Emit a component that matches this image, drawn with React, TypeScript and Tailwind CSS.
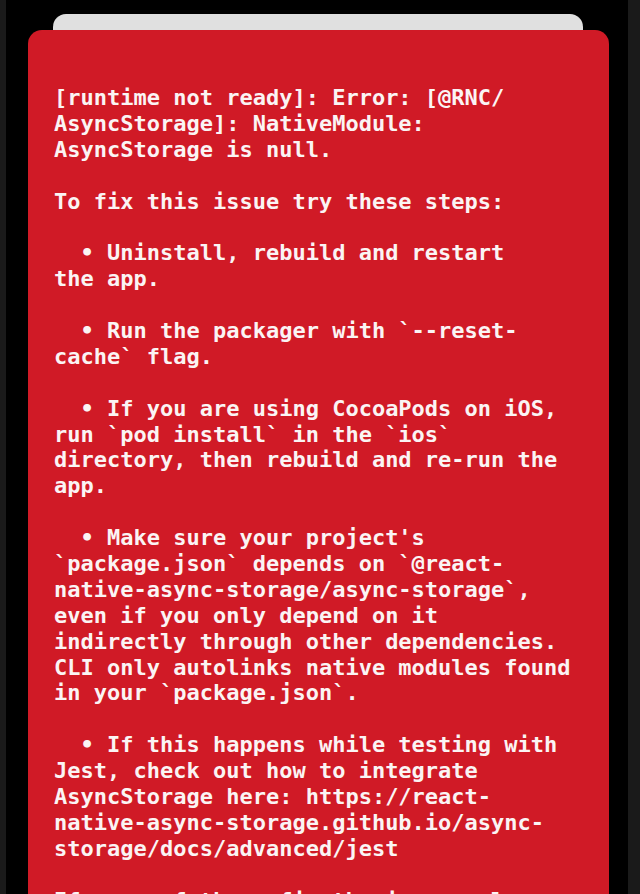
import React from "react";

const lines: string[] = [
    "[runtime not ready]: Error: [@RNC/",
    "AsyncStorage]: NativeModule:",
    "AsyncStorage is null.",
    "",
    "To fix this issue try these steps:",
    "",
    "  • Uninstall, rebuild and restart",
    "the app.",
    "",
    "  • Run the packager with `--reset-",
    "cache` flag.",
    "",
    "  • If you are using CocoaPods on iOS,",
    "run `pod install` in the `ios`",
    "directory, then rebuild and re-run the",
    "app.",
    "",
    "  • Make sure your project's",
    "`package.json` depends on `@react-",
    "native-async-storage/async-storage`,",
    "even if you only depend on it",
    "indirectly through other dependencies.",
    "CLI only autolinks native modules found",
    "in your `package.json`.",
    "",
    "  • If this happens while testing with",
    "Jest, check out how to integrate",
    "AsyncStorage here: https://react-",
    "native-async-storage.github.io/async-",
    "storage/docs/advanced/jest",
    "",
    "If none of these fix the issue, please",
    "open an issue on Github:",
];

export default function App() {
    return <div className="w-[640px] h-[894px] bg-black overflow-hidden flex flex-row">
        <div className="w-[6px] h-full bg-[#1a1a1a]"></div>
        <div className="flex-1 h-full flex flex-col pt-[14px] min-h-0">
            <div className="shrink-0 ml-[47px] mr-[45px] h-[16px] rounded-t-[13px] bg-[#e0e0e0]"></div>
            <div className="ml-[22px] mr-[19px] flex-1 min-h-0 overflow-hidden rounded-t-[14px] bg-[#d01a26] pt-[55px] pl-[26px] pr-[20px]">
                <div className="text-[22px] leading-[25.9px] font-bold text-[#fbf4f4]"
                    style={{ fontFamily: '"DejaVu Sans Mono", "Liberation Mono", monospace' }}>
                    {lines.map((line, i) => (
                        <div key={i} className="whitespace-pre h-[25.9px]">{line || " "}</div>
                    ))}
                </div>
            </div>
        </div>
        <div className="w-[12px] h-full bg-[#1a1a1a]"></div>
    </div>;
}
